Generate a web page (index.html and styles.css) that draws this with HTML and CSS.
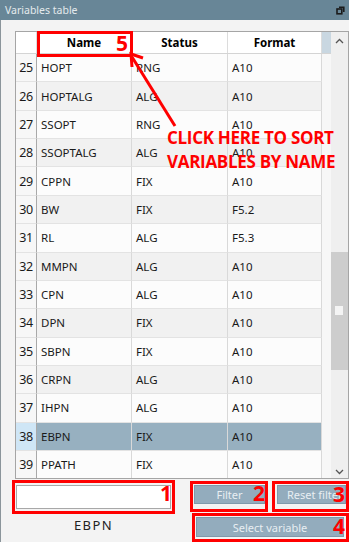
FILE: index.html
```html
<!DOCTYPE html>
<html lang="en">
<head>
    <meta charset="UTF-8">
    <title>Variables table</title>
    <link rel="stylesheet" href="styles.css">
</head>
<body>
<div class="window">
    <div class="titlebar">
        <span>Variables table</span>
        <svg class="restore-icon" width="9" height="9" viewBox="0 0 9 9">
            <path d="M3 1.2h4.8v4.8" fill="none" stroke="#1b1b1b" stroke-width="1.6"/>
            <rect x="1" y="3" width="4.8" height="4.8" fill="none" stroke="#1b1b1b" stroke-width="1.6"/>
        </svg>
    </div>

    <div class="content">
        <div class="table">
            <div class="cols">
                <div class="head">
                    <div class="cell"></div>
                    <div class="cell">Name</div>
                    <div class="cell">Status</div>
                    <div class="cell">Format</div>
                    <div class="cell filler"></div>
                </div>
                <div class="rows">
                    <div class="row"><div class="num">25</div><div class="cell">HOPT</div><div class="cell">RNG</div><div class="cell">A10</div></div>
                    <div class="row even"><div class="num">26</div><div class="cell">HOPTALG</div><div class="cell">ALG</div><div class="cell">A10</div></div>
                    <div class="row"><div class="num">27</div><div class="cell">SSOPT</div><div class="cell">RNG</div><div class="cell">A10</div></div>
                    <div class="row even"><div class="num">28</div><div class="cell">SSOPTALG</div><div class="cell">ALG</div><div class="cell">A10</div></div>
                    <div class="row"><div class="num">29</div><div class="cell">CPPN</div><div class="cell">FIX</div><div class="cell">A10</div></div>
                    <div class="row even"><div class="num">30</div><div class="cell">BW</div><div class="cell">FIX</div><div class="cell">F5.2</div></div>
                    <div class="row"><div class="num">31</div><div class="cell">RL</div><div class="cell">ALG</div><div class="cell">F5.3</div></div>
                    <div class="row even"><div class="num">32</div><div class="cell">MMPN</div><div class="cell">ALG</div><div class="cell">A10</div></div>
                    <div class="row"><div class="num">33</div><div class="cell">CPN</div><div class="cell">ALG</div><div class="cell">A10</div></div>
                    <div class="row even"><div class="num">34</div><div class="cell">DPN</div><div class="cell">FIX</div><div class="cell">A10</div></div>
                    <div class="row"><div class="num">35</div><div class="cell">SBPN</div><div class="cell">FIX</div><div class="cell">A10</div></div>
                    <div class="row even"><div class="num">36</div><div class="cell">CRPN</div><div class="cell">ALG</div><div class="cell">A10</div></div>
                    <div class="row"><div class="num">37</div><div class="cell">IHPN</div><div class="cell">ALG</div><div class="cell">A10</div></div>
                    <div class="row selected"><div class="num">38</div><div class="cell">EBPN</div><div class="cell">FIX</div><div class="cell">A10</div></div>
                    <div class="row"><div class="num">39</div><div class="cell">PPATH</div><div class="cell">FIX</div><div class="cell">A10</div></div>
                </div>
            </div>
            <div class="scroll">
                <div class="scroll-btn up">
                    <svg width="9" height="6" viewBox="0 0 9 6"><path d="M1 5l3.5-3.5L8 5" fill="none" stroke="#555" stroke-width="1.3"/></svg>
                </div>
                <div class="track">
                    <div class="thumb"><div class="grip"></div></div>
                </div>
                <div class="scroll-btn down">
                    <svg width="9" height="6" viewBox="0 0 9 6"><path d="M1 1l3.5 3.5L8 1" fill="none" stroke="#555" stroke-width="1.3"/></svg>
                </div>
            </div>
        </div>

        <div class="controls">
            <div class="line">
                <div class="mark mark-input">
                    <input type="text" class="search">
                    <span class="digit d1">1</span>
                </div>
                <div class="mark mark-filter">
                    <button class="btn">Filter</button>
                    <span class="digit d2">2</span>
                </div>
                <div class="mark mark-reset">
                    <button class="btn btn-left">Reset filter</button>
                    <span class="digit d3">3</span>
                </div>
            </div>
            <div class="line">
                <div class="current">EBPN</div>
                <div class="mark mark-select">
                    <button class="btn btn-wide">Select variable</button>
                    <span class="digit d4">4</span>
                </div>
            </div>
        </div>
    </div>

    <!-- annotation over the Name header -->
    <div class="name-mark"></div>
    <span class="digit d5">5</span>
    <svg class="arrow" width="349" height="542" viewBox="0 0 349 542">
        <line x1="175" y1="126" x2="132" y2="57" stroke="#f00" stroke-width="3"/>
        <polyline points="143,58 131,54 132,67" fill="none" stroke="#f00" stroke-width="3"/>
    </svg>
    <div class="note">CLICK HERE TO SORT<br>VARIABLES BY NAME</div>
</div>
</body>
</html>
```

FILE: styles.css
```css
* {
    box-sizing: border-box;
}

body {
    margin: 0;
    font-family: "Noto Sans", sans-serif;
    background-color: #f3f3f3;
    color: #1a1a1a;
}

.window {
    position: relative;
    width: 349px;
    height: 542px;
    overflow: hidden;
    background-color: #f3f3f3;
}

.titlebar {
    height: 20px;
    background-color: #688697;
    color: #e4eaed;
    font-size: 10.5px;
    display: flex;
    align-items: center;
    justify-content: space-between;
    padding: 0 4px 0 5px;
}

.restore-icon {
    display: block;
}

.content {
    height: 522px;
    border-left: 1px solid #8b959b;
    padding-top: 11px;
}

.table {
    margin-left: 14px;
    width: 334px;
    height: 448px;
    border: 1px solid #a5a5a5;
    background-color: #f7f7f7;
    display: flex;
}

.cols {
    width: 315px;
    overflow: hidden;
}

.head {
    display: grid;
    grid-template-columns: 21px 95px 96px 94px 9px;
    height: 22px;
    background-color: #fff;
    border-bottom: 1px solid #d4d4d4;
    font-size: 11.5px;
    font-weight: 700;
    color: #000;
}

.head .cell {
    border-right: 1px solid #dcdcdc;
    text-align: center;
    line-height: 21px;
}

.head .filler {
    background-color: #c9d7e1;
    border-right: none;
}

.rows {
    height: 424px;
    overflow: hidden;
}

.row {
    display: grid;
    grid-template-columns: 21px 95px 96px 94px;
    height: 28.36px;
    font-size: 11.5px;
}

.row .cell,
.row .num {
    display: flex;
    align-items: center;
    border-right: 1px solid #d9d9d9;
    border-bottom: 1px solid #e3e3e3;
    background-color: #fcfcfc;
}

.row .cell {
    padding-left: 4px;
}

.row.even .cell {
    background-color: #f1f1f1;
}

.row .num {
    justify-content: center;
    font-size: 12.5px;
    letter-spacing: -0.4px;
    border-right-color: #a9a9a9;
    background-color: #f7f7f7;
}

.row.selected .cell {
    background-color: #97b0c0;
}

.row.selected .num {
    background-color: #cfe6f6;
}

.scroll {
    width: 17px;
    background-color: #efefef;
    display: flex;
    flex-direction: column;
}

.scroll-btn {
    height: 17px;
    display: flex;
    justify-content: center;
    align-items: center;
}

.scroll-btn.down {
    align-items: flex-end;
    padding-bottom: 3px;
}

.track {
    flex: 1;
}

.thumb {
    margin-top: 203px;
    height: 118px;
    background-color: #cdcdcd;
    padding: 54px 0 0 4px;
}

.grip {
    width: 8px;
    height: 9px;
    background-color: #f4f4f4;
}

.controls {
    padding: 1px 0 0 11px;
}

.line {
    display: flex;
    align-items: flex-start;
}

.mark {
    position: relative;
    border: 3px solid #f00;
}

.mark-input {
    width: 163px;
    height: 34px;
    padding: 2px 1px 2px 1px;
}

.search {
    display: block;
    width: 155px;
    height: 24px;
    margin: 0;
    border: 1px solid #a8a8a8;
    background-color: #fff;
    font-family: "Noto Sans", sans-serif;
}

.mark-filter {
    width: 78px;
    height: 31px;
    margin: 1px 0 0 15px;
    padding: 1px 0 0 1px;
}

.mark-reset {
    width: 77px;
    height: 31px;
    margin: 1px 0 0 4px;
    padding: 1px 0 0 2px;
}

.mark-select {
    width: 157px;
    height: 29px;
    margin: -1px 0 0 17px;
    padding: 1px 2px 0 1px;
}

.btn {
    display: block;
    width: 71px;
    height: 19px;
    padding: 0;
    border: 1px solid #7f99ab;
    background-color: #93acbd;
    color: #e8eef2;
    font-family: "Noto Sans", sans-serif;
    font-size: 11px;
    white-space: nowrap;
    overflow: hidden;
}

.btn-left {
    width: 69px;
    text-align: left;
    padding-left: 9px;
}

.btn-wide {
    width: 148px;
    height: 20px;
}

.current {
    width: 163px;
    text-align: center;
    padding-top: 3px;
    font-size: 13px;
    line-height: 16px;
    letter-spacing: 1.4px;
    color: #222;
}

.digit {
    position: absolute;
    font-family: "Open Sans", sans-serif;
    font-weight: 700;
    font-size: 21px;
    line-height: 21px;
    color: #f00;
}

.d1 { left: 145px; top: 0; }
.d2 { left: 60px; top: -1px; }
.d3 { left: 58px; top: 0; }
.d4 { left: 138px; top: 0; }
.d5 { left: 116px; top: 33px; }

.name-mark {
    position: absolute;
    left: 37px;
    top: 31px;
    width: 96px;
    height: 26px;
    border: 3px solid #f00;
}

.arrow {
    position: absolute;
    left: 0;
    top: 0;
    pointer-events: none;
}

.note {
    position: absolute;
    left: 167px;
    top: 126px;
    font-family: "Open Sans", sans-serif;
    font-weight: 700;
    font-size: 17px;
    line-height: 24px;
    letter-spacing: -0.3px;
    color: #f00;
    white-space: nowrap;
}
```
